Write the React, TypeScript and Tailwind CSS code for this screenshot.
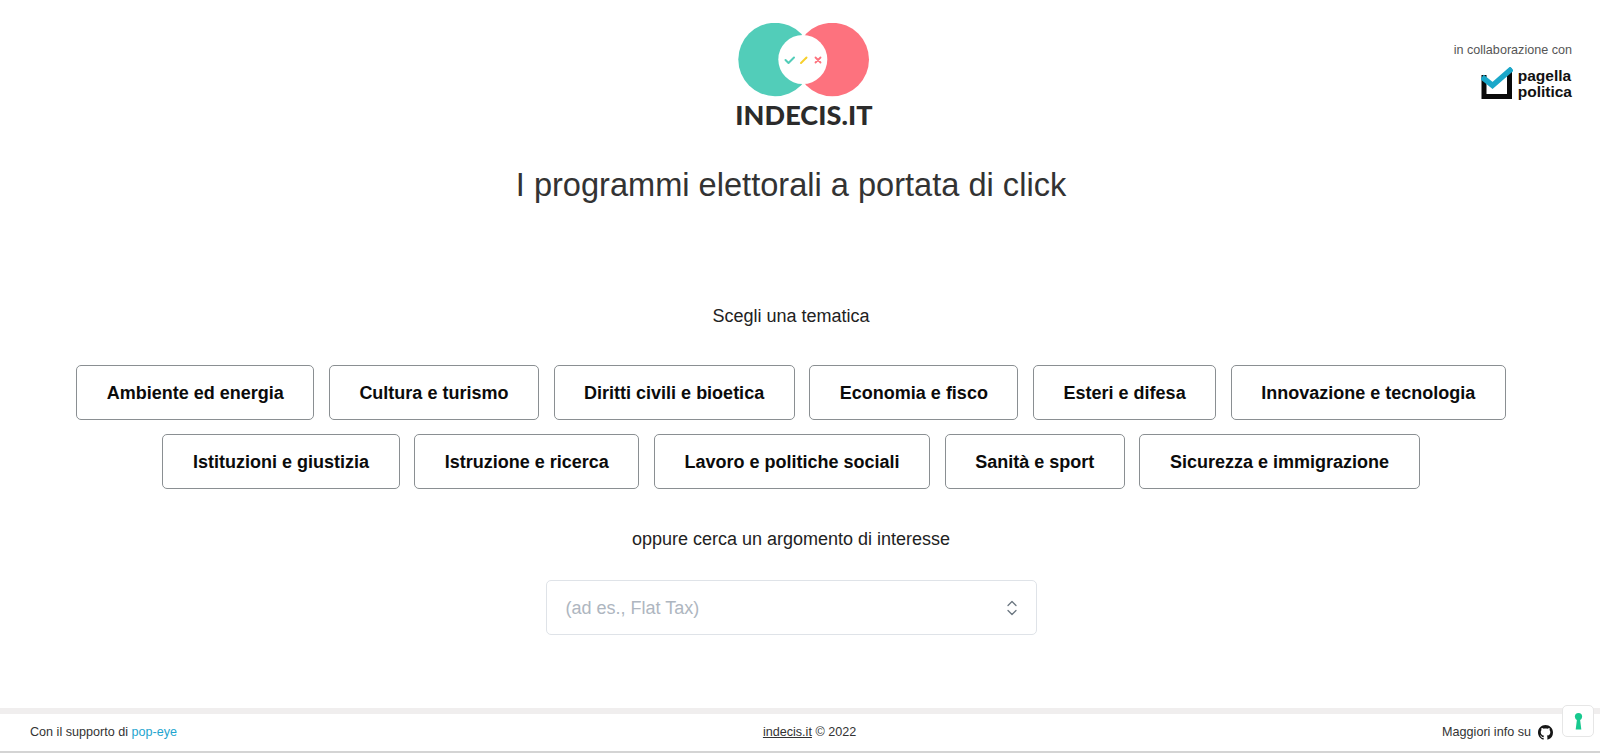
const row1 = ["Ambiente ed energia", "Cultura e turismo", "Diritti civili e bioetica", "Economia e fisco", "Esteri e difesa", "Innovazione e tecnologia"];
const row2 = ["Istituzioni e giustizia", "Istruzione e ricerca", "Lavoro e politiche sociali", "Sanità e sport", "Sicurezza e immigrazione"];

function TopicRow({ items }: { items: string[] }) {
  return (
    <div className="flex justify-center gap-[14.5px]">
      {items.map((t) => (
        <button key={t} className="h-[55px] pt-[1px] px-[29.6px] bg-white border border-[#8a8f92] rounded-[5px] text-[18px] font-bold text-[#0b0b0b] whitespace-nowrap">
          {t}
        </button>
      ))}
    </div>
  );
}

function LogoMark() {
  return (
    <svg width="138" height="76" viewBox="0 0 138 76" className="block">
      <circle cx="40" cy="36.5" r="36.7" fill="#52cdb9" />
      <circle cx="97.3" cy="36.5" r="36.7" fill="#fd727e" />
      <circle cx="67.8" cy="36.5" r="24.5" fill="#ffffff" />
      <path d="M50.5 37l3 3 5.5-5.5" fill="none" stroke="#52cdb9" strokeWidth="2" strokeLinecap="round" strokeLinejoin="round" />
      <path d="M66 40l5.5-5.5" fill="none" stroke="#f7d02c" strokeWidth="2" strokeLinecap="round" />
      <path d="M80.5 34.5l5 5M85.5 34.5l-5 5" fill="none" stroke="#fd727e" strokeWidth="1.8" strokeLinecap="round" />
    </svg>
  );
}

function PagellaMark() {
  return (
    <svg width="32" height="33" viewBox="0 0 32 33" className="block">
      <path d="M0.5 8H5.5V27H26V6L31 1V32H0.5Z" fill="#0a0a0a" />
      <path d="M1 10l10.5 8.5L31 1.5" fill="none" stroke="#1aa7c9" strokeWidth="5.5" />
    </svg>
  );
}

function GithubMark() {
  return (
    <svg width="15" height="15" viewBox="0 0 16 16" fill="#161616" className="block">
      <path d="M8 0C3.58 0 0 3.58 0 8c0 3.54 2.29 6.53 5.47 7.59.4.07.55-.17.55-.38 0-.19-.01-.82-.01-1.49-2.01.37-2.53-.49-2.69-.94-.09-.23-.48-.94-.82-1.13-.28-.15-.68-.52-.01-.53.63-.01 1.08.58 1.23.82.72 1.21 1.87.87 2.33.66.07-.52.28-.87.51-1.07-1.78-.2-3.64-.89-3.64-3.95 0-.87.31-1.59.82-2.15-.08-.2-.36-1.02.08-2.12 0 0 .67-.21 2.2.82.64-.18 1.32-.27 2-.27s1.36.09 2 .27c1.53-1.04 2.2-.82 2.2-.82.44 1.1.16 1.92.08 2.12.51.56.82 1.27.82 2.15 0 3.07-1.87 3.75-3.65 3.95.29.25.54.73.54 1.48 0 1.07-.01 1.93-.01 2.2 0 .21.15.46.55.38A8.01 8.01 0 0 0 16 8c0-4.42-3.58-8-8-8z" />
    </svg>
  );
}

export default function App() {
  return (
    <div className="relative h-[753px] w-full overflow-hidden bg-white flex flex-col font-['Liberation_Sans',Arial,sans-serif] text-[#222]">
      <header className="grid grid-cols-[735px_138px_1fr] pt-[23px] h-[163px]">
        <div />
        <div className="flex flex-col items-center">
          <LogoMark />
          <div className="mt-[4px] font-['Lato',sans-serif] font-black text-[27px] leading-[24px] text-[#2b2b2b] whitespace-nowrap tracking-[0.1px]">INDECIS.IT</div>
        </div>
        <div className="flex flex-col items-end pr-[28px] pt-[20px]">
          <div className="text-[12.6px] leading-[14px] text-[#555] whitespace-nowrap">in collaborazione con</div>
          <div className="flex items-center gap-[5px] mt-[10px]">
            <PagellaMark />
            <div className="text-[15.5px] leading-[16px] font-bold text-[#111]">
              pagella
              <br />
              politica
            </div>
          </div>
        </div>
      </header>

      <main className="flex flex-col items-center w-[1582px] flex-1">
        <h1 className="text-[32.6px] leading-[44px] font-normal text-[#333] whitespace-nowrap">I programmi elettorali a portata di click</h1>
        <p className="mt-[97px] text-[18px] leading-[24px] text-[#222]">Scegli una tematica</p>
        <div className="mt-[37px] flex flex-col gap-[14px]">
          <TopicRow items={row1} />
          <TopicRow items={row2} />
        </div>
        <p className="mt-[38px] text-[18px] leading-[24px] text-[#222]">oppure cerca un argomento di interesse</p>
        <div className="mt-[29px] w-[491px] h-[55px] border border-[#dfe3e8] rounded-[5px] flex items-center justify-between pl-[19px] pr-[18px] bg-white">
          <span className="pt-[2px] text-[18px] text-[#aeb6c0]">(ad es., Flat Tax)</span>
          <svg width="12" height="18" viewBox="0 0 12 18" fill="none" stroke="#6b7680" strokeWidth="1.3" strokeLinecap="round" strokeLinejoin="round" className="block">
            <path d="M2 6.5L6 2.5l4 4" />
            <path d="M2 11.5l4 4 4-4" />
          </svg>
        </div>
      </main>

      <footer className="border-t-[6px] border-t-[#f0eeee] border-b-[2px] border-b-[#d4d4d4] h-[45px] flex items-center justify-between pl-[30px] pr-[47px] text-[12.6px] text-[#333]">
        <div>
          Con il supporto di <span className="text-[#1ea5cf]">pop-eye</span>
        </div>
        <div>
          <span className="underline">indecis.it</span> © 2022
        </div>
        <div className="flex items-center gap-[7px]">
          <span>Maggiori info su</span>
          <GithubMark />
        </div>
      </footer>

      <div className="absolute left-[1562px] top-[705px] w-[32px] h-[32px] bg-white border border-[#e6e6e6] rounded-[5px] flex items-center justify-center">
        <svg width="9" height="17" viewBox="0 0 9 17" fill="#17c98f" className="block">
          <circle cx="4.5" cy="3.6" r="3.6" />
          <path d="M3 6h3l1.3 10.5H1.7z" />
        </svg>
      </div>
    </div>
  );
}
